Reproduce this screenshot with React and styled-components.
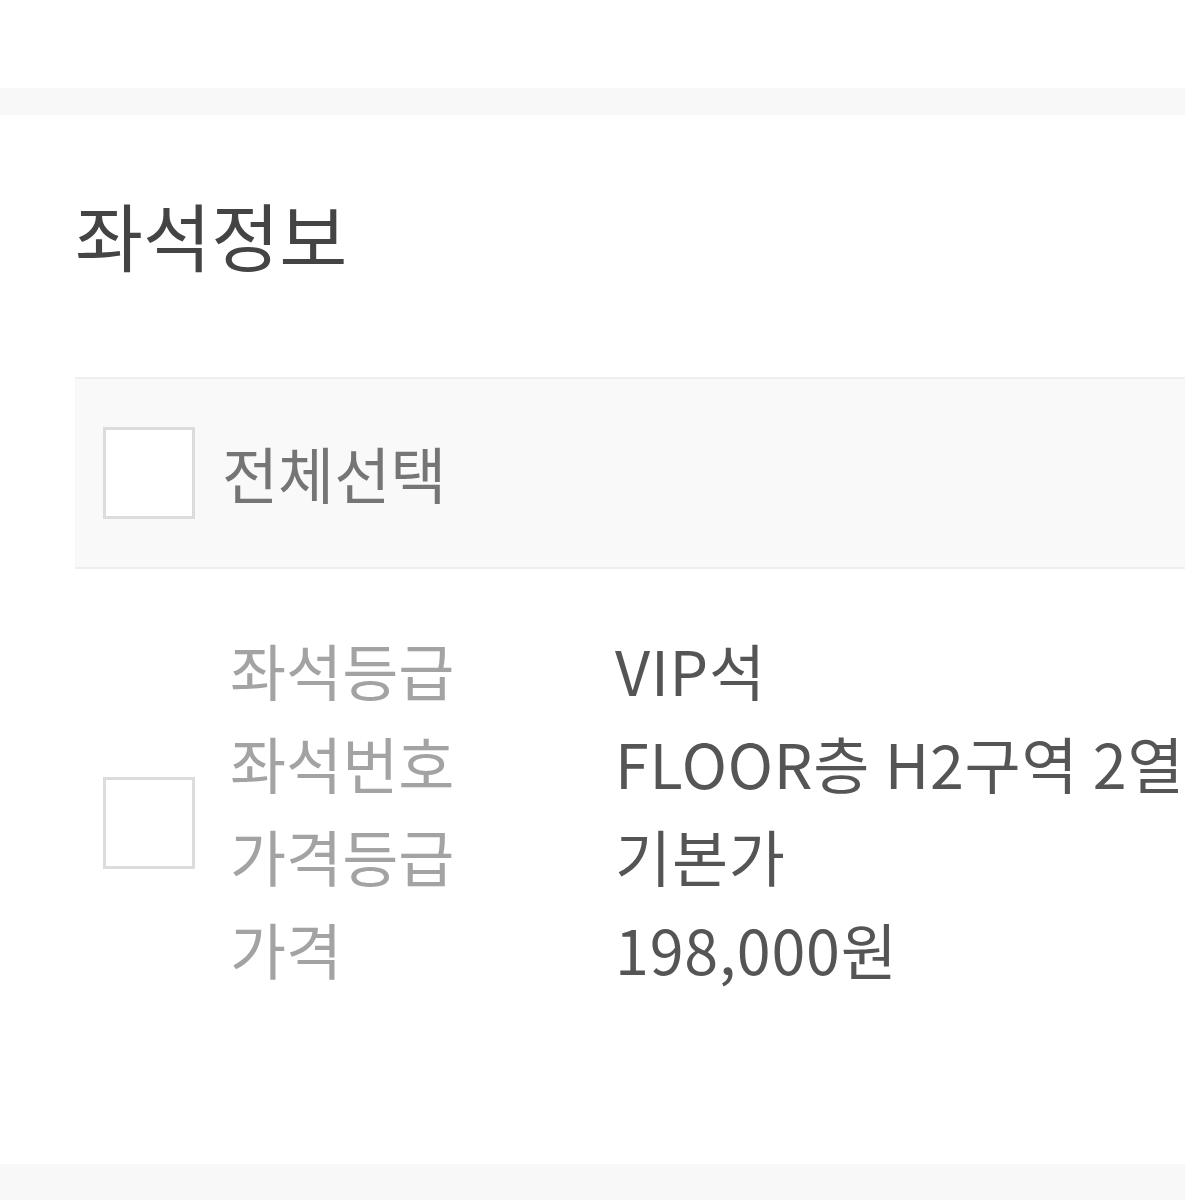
import { Fragment } from "react";
import styled, { createGlobalStyle } from "styled-components";

const GlobalStyle = createGlobalStyle`
  body {
    margin: 0;
    background: #fff;
    font-family: "Noto Sans CJK KR", "Noto Sans", sans-serif;
  }
`;

const Page = styled.div`
  width: 1185px;
  height: 1200px;
  overflow: hidden;
  padding-top: 88px;
  box-sizing: border-box;
`;

const Band = styled.div`
  height: ${(p) => p.$height}px;
  background-color: #f8f8f8;
`;

const Section = styled.section`
  padding: 78px 0 169px 75px;
`;

const Title = styled.h2`
  margin: 0;
  font-size: 74px;
  line-height: 82px;
  font-weight: 400;
  color: #444;
`;

const HeaderRow = styled.div`
  margin-top: 102px;
  height: 188px;
  display: flex;
  align-items: center;
  gap: 27px;
  padding-left: 28px;
  background-color: #f9f9f9;
  border-top: 2px solid #eeeeee;
  border-bottom: 2px solid #eeeeee;
`;

const Checkbox = styled.span`
  display: block;
  flex-shrink: 0;
  width: 92px;
  height: 92px;
  box-sizing: border-box;
  background: #fff;
  border: 3px solid #dcdcdc;
  margin-top: ${(p) => p.$offset || 0}px;
`;

const HeaderText = styled.span`
  font-size: 61px;
  line-height: 80px;
  color: #757575;
`;

const ItemRow = styled.div`
  display: flex;
  align-items: center;
  gap: 35px;
  padding: 54px 0 0 28px;
`;

const InfoList = styled.dl`
  margin: 0;
  display: grid;
  grid-template-columns: 385px auto;
  font-size: 61px;
  line-height: 93px;
  white-space: nowrap;

  dt {
    color: #a3a3a3;
  }

  dd {
    margin: 0;
    color: #555;
    letter-spacing: 0.8px;
  }
`;

const seatInfo = [
  { label: "좌석등급", value: "VIP석" },
  { label: "좌석번호", value: "FLOOR층 H2구역 2열" },
  { label: "가격등급", value: "기본가" },
  { label: "가격", value: "198,000원" },
];

export default function App() {
  return (
    <Page>
      <GlobalStyle />
      <Band $height={27} />
      <Section>
        <Title>좌석정보</Title>
        <HeaderRow>
          <Checkbox />
          <HeaderText>전체선택</HeaderText>
        </HeaderRow>
        <ItemRow>
          <Checkbox $offset={28} />
          <InfoList>
            {seatInfo.map((item) => (
              <Fragment key={item.label}>
                <dt>{item.label}</dt>
                <dd>{item.value}</dd>
              </Fragment>
            ))}
          </InfoList>
        </ItemRow>
      </Section>
      <Band $height={40} />
    </Page>
  );
}
